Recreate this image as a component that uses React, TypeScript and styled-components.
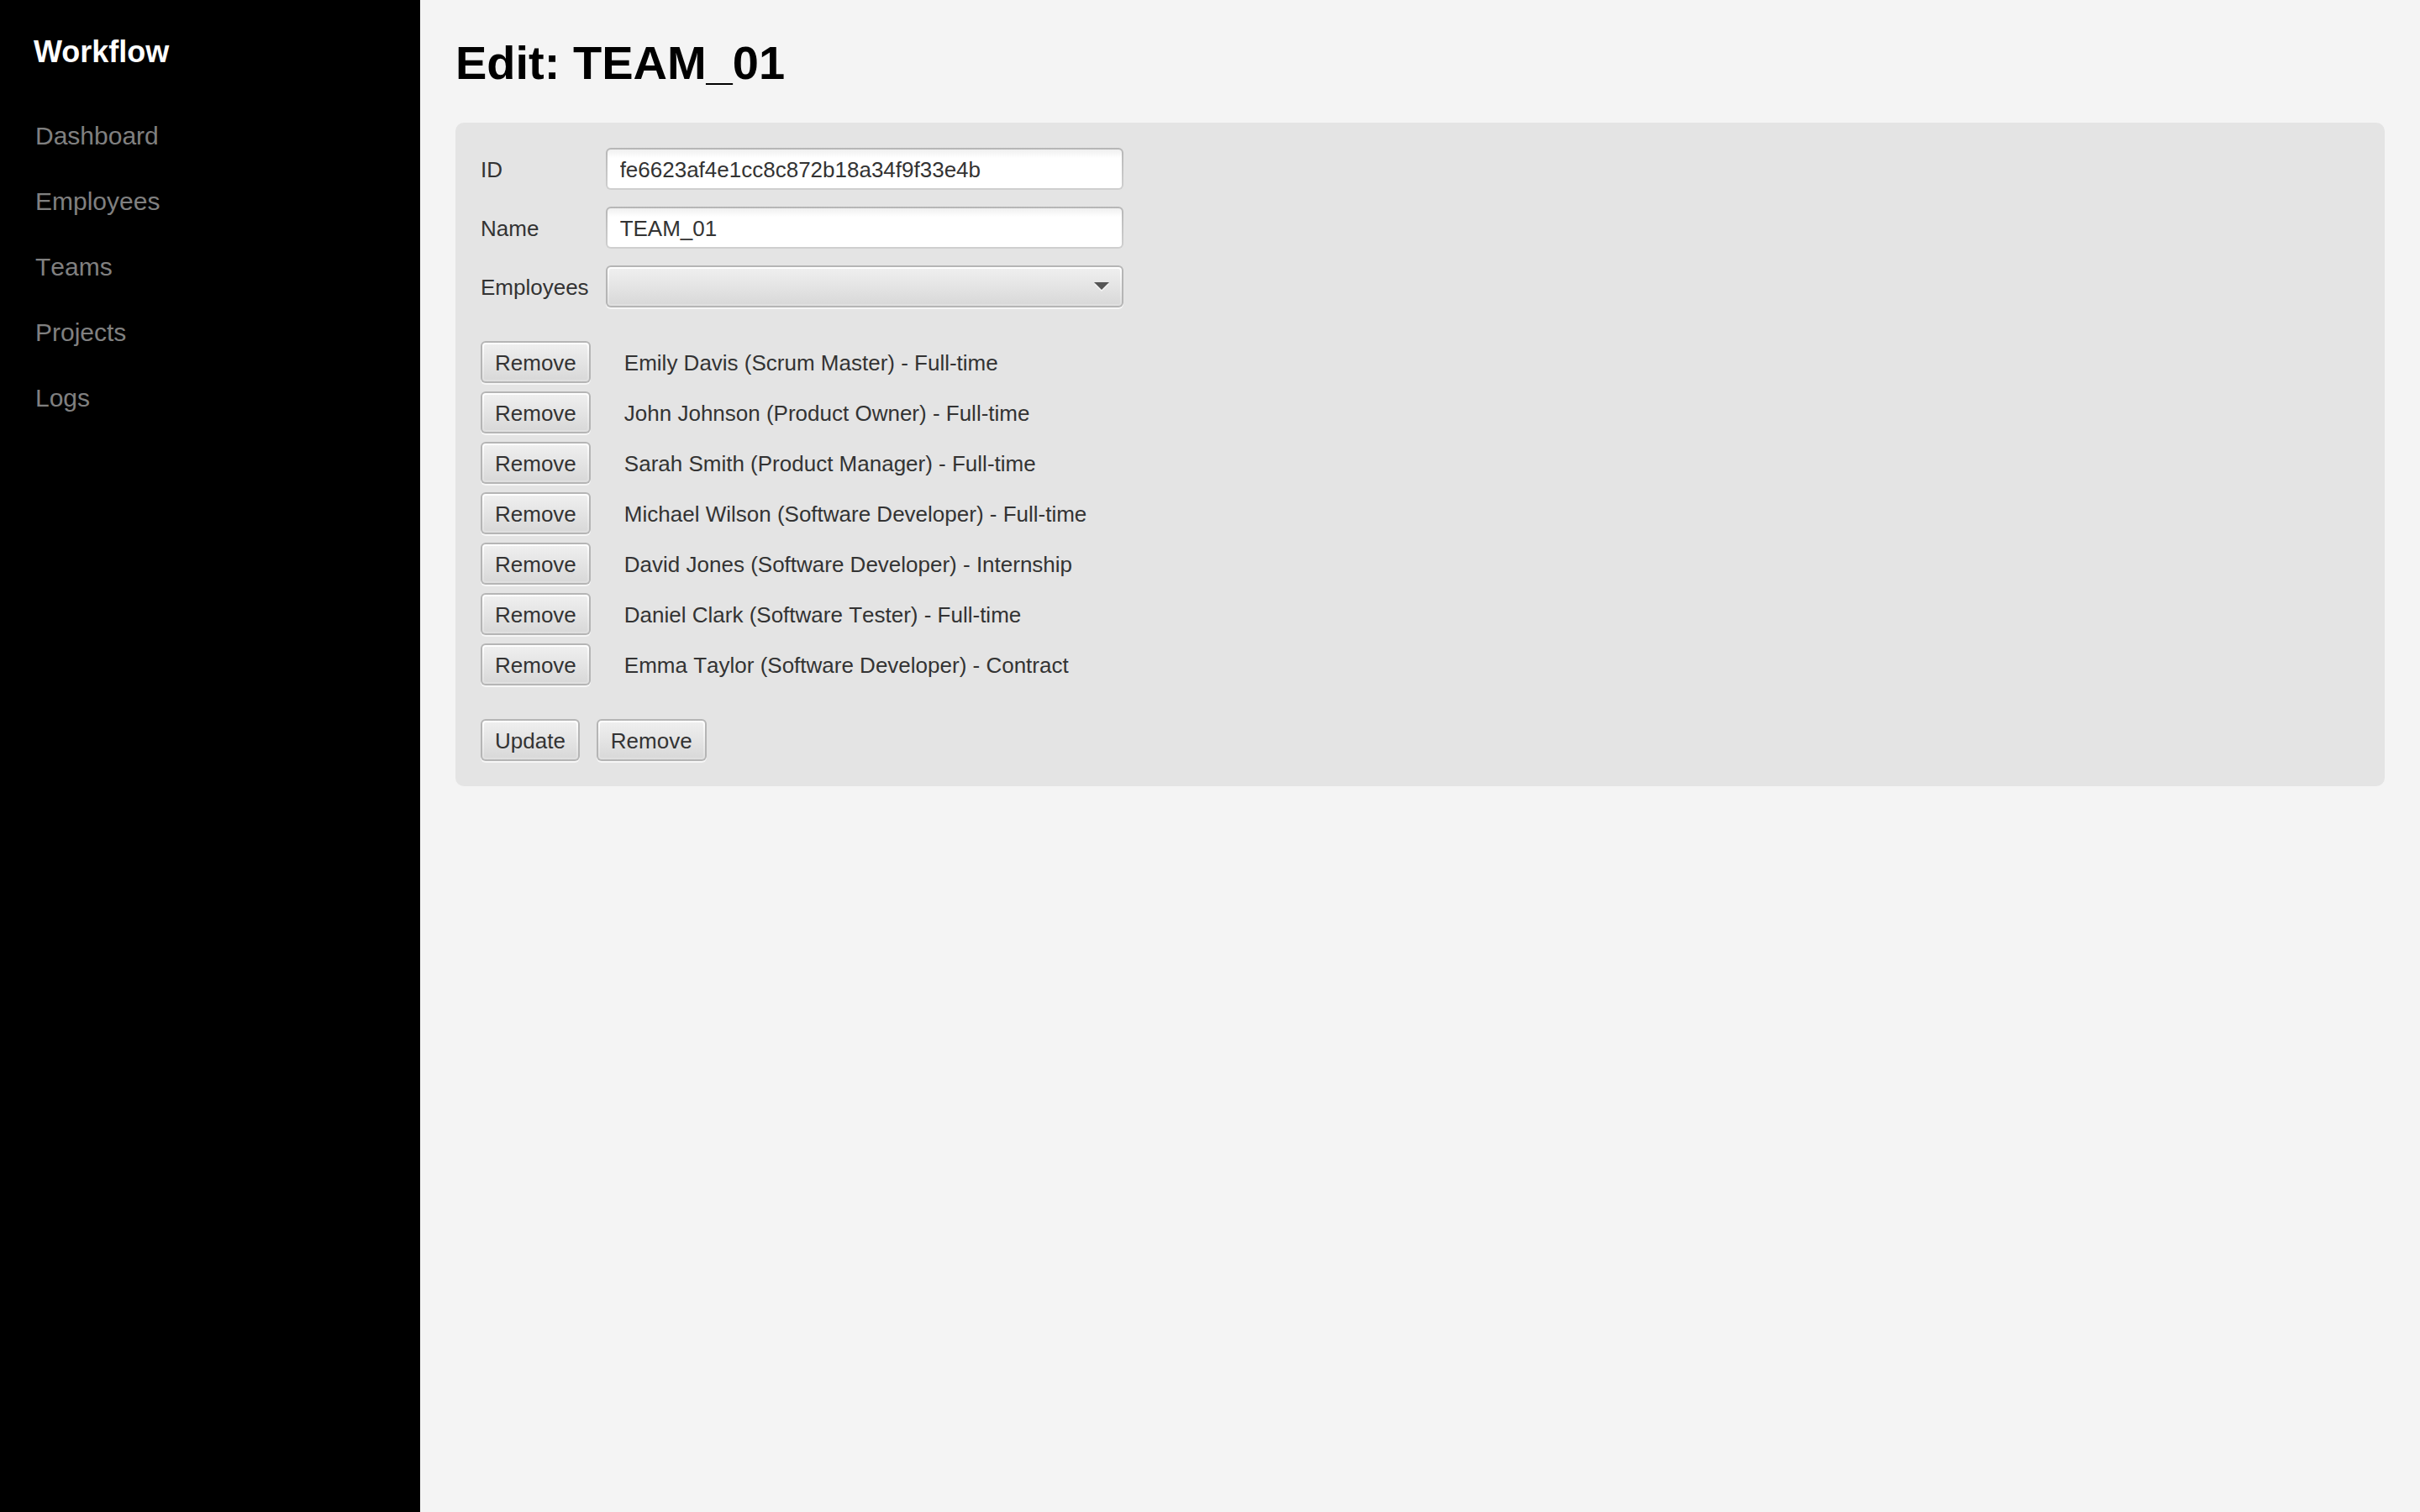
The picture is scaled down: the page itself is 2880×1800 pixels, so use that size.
import React, { useState } from "react";
import styled, { createGlobalStyle, css } from "styled-components";

const GlobalStyle = createGlobalStyle`
  *, *::before, *::after { box-sizing: border-box; }
  body {
    margin: 0;
    background: #f4f4f4;
    color: #333333;
    font: 26px/30px "Liberation Sans", Arial, sans-serif;
    font-kerning: none;
  }
`;

const Shell = styled.div`
  display: flex;
  min-height: 100vh;
`;

const Sidebar = styled.aside`
  flex: 0 0 500px;
  padding: 40px;
  background: #000000;
`;

const Brand = styled.div`
  color: #ffffff;
  font-size: 36px;
  line-height: 44px;
  font-weight: 700;
  font-kerning: normal;
`;

const Nav = styled.nav`
  display: flex;
  flex-direction: column;
  align-items: flex-start;
  gap: 42px;
  margin-top: 60px;
  padding-left: 2px;
`;

const NavLink = styled.a`
  color: #808080;
  font-size: 30px;
  line-height: 36px;
  text-decoration: none;
`;

const Main = styled.main`
  flex: 1;
  min-width: 0;
  padding: 42px;
`;

const Title = styled.h1`
  margin: 0 0 38px;
  color: #000000;
  font-size: 56px;
  line-height: 66px;
  font-weight: 700;
`;

const Panel = styled.form`
  display: flex;
  flex-direction: column;
  gap: 40px;
  padding: 30px;
  border-radius: 10px;
  background: #e4e4e4;
`;

const Fields = styled.div`
  display: grid;
  grid-template-columns: max-content 616px;
  align-items: center;
  gap: 20px;
`;

const FieldLabel = styled.label`
  padding-top: 2px;
`;

const controlBox = css`
  height: 50px;
  border: 2px solid transparent;
  border-radius: 6px;
  color: inherit;
  font: inherit;
  font-kerning: none;
`;

const raised = css`
  padding: 2px;
  background:
    linear-gradient(#efefef, #d9d9d9) content-box,
    linear-gradient(#ffffff, #dfdfdf) padding-box,
    #b5b5b5 border-box;
  box-shadow: 0 2px 0 #f6f6f6;
`;

const TextInput = styled.input`
  ${controlBox}
  width: 100%;
  padding: 2px 15px 0;
  background:
    linear-gradient(#f0f0f0, #ffffff 10px) padding-box,
    linear-gradient(#b6b6b6, #cfcfcf) border-box;
`;

const SelectWrap = styled.div`
  position: relative;
`;

const Select = styled.select`
  ${controlBox}
  ${raised}
  display: block;
  width: 100%;
  appearance: none;
`;

const Arrow = styled.svg`
  position: absolute;
  top: 20px;
  right: 17px;
  pointer-events: none;
`;

const Button = styled.button`
  ${controlBox}
  ${raised}
`;

const ButtonLabel = styled.span`
  display: block;
  padding: 2px 13px 0;
`;

const Members = styled.ul`
  display: flex;
  flex-direction: column;
  gap: 10px;
  margin: 0;
  padding: 0;
  list-style: none;
`;

const Member = styled.li`
  display: flex;
  align-items: center;
  gap: 40px;
`;

const MemberName = styled.span`
  padding-top: 2px;
`;

const Actions = styled.div`
  display: flex;
  gap: 20px;
`;

const links = ["Dashboard", "Employees", "Teams", "Projects", "Logs"];

const initialMembers = [
  "Emily Davis (Scrum Master) - Full-time",
  "John Johnson (Product Owner) - Full-time",
  "Sarah Smith (Product Manager) - Full-time",
  "Michael Wilson (Software Developer) - Full-time",
  "David Jones (Software Developer) - Internship",
  "Daniel Clark (Software Tester) - Full-time",
  "Emma Taylor (Software Developer) - Contract",
];

export default function App() {
  const [members, setMembers] = useState(initialMembers);

  return (
    <>
      <GlobalStyle />
      <Shell>
        <Sidebar>
          <Brand>Workflow</Brand>
          <Nav>
            {links.map((link) => (
              <NavLink key={link} href={`#${link.toLowerCase()}`}>
                {link}
              </NavLink>
            ))}
          </Nav>
        </Sidebar>
        <Main>
          <Title>Edit: TEAM_01</Title>
          <Panel onSubmit={(event) => event.preventDefault()}>
            <Fields>
              <FieldLabel htmlFor="team-id">ID</FieldLabel>
              <TextInput id="team-id" defaultValue="fe6623af4e1cc8c872b18a34f9f33e4b" />
              <FieldLabel htmlFor="team-name">Name</FieldLabel>
              <TextInput id="team-name" defaultValue="TEAM_01" />
              <FieldLabel htmlFor="team-employees">Employees</FieldLabel>
              <SelectWrap>
                <Select id="team-employees" defaultValue="">
                  <option value="" />
                </Select>
                <Arrow width="18" height="12" viewBox="0 0 18 12" aria-hidden="true">
                  <path d="M0 2h18l-9 9z" fill="#f6f6f6" />
                  <path d="M0 0h18l-9 9z" fill="#555555" />
                </Arrow>
              </SelectWrap>
            </Fields>
            <Members>
              {members.map((member) => (
                <Member key={member}>
                  <Button
                    type="button"
                    onClick={() => setMembers(members.filter((other) => other !== member))}
                  >
                    <ButtonLabel>Remove</ButtonLabel>
                  </Button>
                  <MemberName>{member}</MemberName>
                </Member>
              ))}
            </Members>
            <Actions>
              <Button type="submit">
                <ButtonLabel>Update</ButtonLabel>
              </Button>
              <Button type="button">
                <ButtonLabel>Remove</ButtonLabel>
              </Button>
            </Actions>
          </Panel>
        </Main>
      </Shell>
    </>
  );
}
